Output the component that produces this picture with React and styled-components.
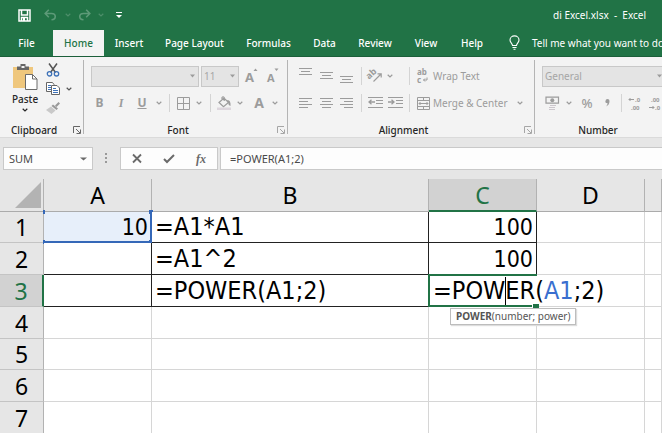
import React from "react";
import styled, { createGlobalStyle } from "styled-components";

const GlobalStyle = createGlobalStyle`
  * { box-sizing: border-box; }
  html, body, #root { height: 100%; }
  body { margin: 0; background: #fff; overflow: hidden; }
  body, button, input, select { font-family: "Noto Sans", sans-serif; font-size: 10px; }
  button { border: 0; padding: 0; background: none; color: inherit; }
`;

const Window = styled.div`
  display: flex;
  flex-direction: column;
  height: 100%;
  margin-right: 2px;
  overflow: hidden;
  background: #e6e6e6;
  color: #262626;
`;

const TitleBar = styled.header`
  display: flex;
  align-items: center;
  flex: none;
  height: 30px;
  padding: 0 16px 0 14px;
  background: #217346;
  color: #fff;
`;

const Title = styled.h1`
  flex: 1;
  margin: 0;
  font-size: 10px;
  font-weight: 400;
  line-height: 28px;
  text-align: right;
  white-space: pre;
`;

const TabBar = styled.nav`
  display: flex;
  flex: none;
  height: 27px;
  background: #217346;
  border-bottom: 1px solid #1b5f3a;
  overflow: hidden;
`;

const Tab = styled.button`
  flex: none;
  width: ${(p) => p.$w}px;
  height: 27px;
  padding-bottom: 1px;
  color: ${(p) => (p.$active ? "#217346" : "#fff")};
  background: ${(p) => (p.$active ? "#f3f3f3" : "transparent")};
  font-weight: 500;
  white-space: nowrap;
`;

const TellMe = styled.button`
  display: flex;
  align-items: center;
  gap: 12px;
  flex: none;
  padding: 0 0 1px 14px;
  color: #fff;
  white-space: nowrap;
`;

const Ribbon = styled.div`
  display: flex;
  flex: none;
  height: 81px;
  background: #f3f3f3;
  border-bottom: 1px solid #dadada;
  overflow: hidden;
`;

const Group = styled.section`
  display: flex;
  flex-direction: column;
  flex: ${(p) => (p.$w ? "none" : "1 0 127px")};
  width: ${(p) => (p.$w ? `${p.$w}px` : "auto")};
  margin-top: 3px;
  padding: 0 ${(p) => (p.$w ? 3 : 0)}px 0 5px;
  background: ${(p) =>
    p.$w ? "linear-gradient(#b4b4b4, #b4b4b4) right top / 1px calc(100% - 3px) no-repeat" : "none"};
`;

const GroupFooter = styled.div`
  display: flex;
  align-items: center;
  height: 14px;
  margin-top: auto;
  h2 {
    flex: 1;
    margin: 0;
    padding-right: 10px;
    font-size: 10px;
    font-weight: 500;
    line-height: 14px;
    text-align: center;
  }
`;

const ToolRow = styled.div`
  display: flex;
  align-items: center;
  height: 26px;
  margin-top: ${(p) => p.$top || 0}px;
  color: #9c9c9c;
`;

const Tool = styled.button`
  display: flex;
  align-items: center;
  justify-content: ${(p) => (p.$start ? "flex-start" : "center")};
  gap: 3px;
  flex: none;
  width: ${(p) => p.$w}px;
  height: 22px;
  color: ${(p) => p.$color || "inherit"};
  white-space: nowrap;
`;

const Glyph = styled.span`
  font-size: ${(p) => p.$size || 12}px;
  font-weight: ${(p) => (p.$bold ? 700 : 500)};
  font-style: ${(p) => (p.$italic ? "italic" : "normal")};
  font-family: ${(p) => (p.$italic ? '"Liberation Serif", serif' : "inherit")};
  text-decoration: ${(p) => (p.$under ? "underline" : "none")};
  line-height: 16px;
`;

const Sep = styled.span`
  flex: none;
  width: 1px;
  height: 18px;
  margin: 0 ${(p) => p.$right ?? 4}px 0 ${(p) => p.$left ?? 4}px;
  background: #d4d4d4;
`;

const Combo = styled.label`
  position: relative;
  display: flex;
  align-items: center;
  flex: ${(p) => (p.$w ? "none" : "1")};
  width: ${(p) => (p.$w ? `${p.$w}px` : "auto")};
  margin-left: 2px;
  height: 21px;
  background: #e4e4e4;
  border: 1px solid #c8c8c8;
  select {
    appearance: none;
    width: 100%;
    height: 19px;
    padding: 0 2px;
    border: 0;
    border-radius: 0;
    background: none;
    color: #a6a6a6;
    opacity: 1;
  }
  svg { position: absolute; right: 3px; }
`;

const PasteArea = styled.div`
  display: flex;
  height: 60px;
`;

const Paste = styled.button`
  display: flex;
  flex-direction: column;
  align-items: center;
  width: 40px;
  padding-top: 3px;
  font-weight: 500;
  line-height: 18px;
`;

const ClipTools = styled.div`
  display: flex;
  flex-direction: column;
  > div { display: flex; align-items: center; height: 19px; }
`;

const FormulaBar = styled.div`
  display: flex;
  flex: none;
  height: 23px;
  margin-top: 9px;
`;

const Field = styled.div`
  display: flex;
  align-items: center;
  flex: ${(p) => (p.$w ? "none" : "1")};
  width: ${(p) => (p.$w ? `${p.$w}px` : "auto")};
  margin-left: ${(p) => p.$left}px;
  background: #fdfdfd;
  border: 1px solid #c9c9c9;
  ${(p) => !p.$w && "border-right: 0;"}
  color: #6a6a6a;
  input {
    flex: 1;
    min-width: 0;
    height: 20px;
    padding: 0 0 0 ${(p) => p.$pad}px;
    border: 0;
    outline: 0;
    background: none;
    color: #4a4a4a;
    font-size: 11px;
  }
`;

const Grip = styled.div`
  display: flex;
  align-items: center;
  justify-content: center;
  width: 26px;
`;

const Sheet = styled.main`
  flex: 1;
  min-height: 0;
  margin-top: 9px;
  overflow: hidden;
  background: #fff;
`;

const Grid = styled.table`
  width: 100%;
  table-layout: fixed;
  border-collapse: separate;
  border-spacing: 0;
  color: #000;
`;

const Col = styled.col`
  width: ${(p) => (p.$w ? `${p.$w}px` : "auto")};
`;

const Head = styled.th`
  height: ${(p) => (p.$row ? "auto" : "33px")};
  padding: 0;
  background: ${(p) => (p.$on ? "#d2d2d2" : "#e6e6e6")};
  color: ${(p) => (p.$on ? "#217346" : "#000")};
  border-right: 1px solid #b2b2b2;
  border-bottom: 1px solid ${(p) => (p.$row ? "#c4c4c4" : "#ababab")};
  ${(p) => p.$on && !p.$row && "border-bottom: 2px solid #217346;"}
  ${(p) => p.$on && p.$row && "border-right: 2px solid #217346;"}
  font-size: 23px;
  font-weight: 400;
  line-height: 28px;
  text-align: center;
  svg { display: block; margin: 0 2px 0 auto; }
`;

const Row = styled.tr`
  height: ${(p) => p.$h}px;
`;

const Cell = styled.td`
  position: relative;
  padding: 0 3px;
  border-right: 1px solid ${(p) => (p.$boxed ? "#222" : "#d6d6d6")};
  border-bottom: 1px solid ${(p) => (p.$boxed ? "#222" : "#d6d6d6")};
  background: ${(p) => (p.$ref ? "#e7effa" : "#fff")};
  font-family: "DejaVu Sans Condensed", "Noto Sans", sans-serif;
  font-size: ${(p) => (p.$num ? 23 : 25)}px;
  line-height: 28px;
  text-align: ${(p) => (p.$num ? "right" : "left")};
  white-space: nowrap;
`;

const RefBox = styled.span`
  position: absolute;
  inset: -1px -1px -1px 0;
  border-right: 2px solid #3568b8;
  border-bottom: 2px solid #3568b8;
`;

const Handle = styled.i`
  position: absolute;
  width: 4px;
  height: 4px;
  background: #3568b8;
  ${(p) => (p.$y === "top" ? "top: -1px;" : "bottom: -3px;")}
  ${(p) => (p.$x === "left" ? "left: -1px; width: 2px;" : "right: -3px;")}
`;

const Editor = styled.div`
  position: absolute;
  z-index: 1;
  top: 0;
  left: 0;
  width: 181px;
  height: 31px;
  padding: 2px 0 0 4px;
  background: #fff;
`;

const EditFrame = styled.span`
  position: absolute;
  top: -1px;
  left: -1px;
  width: 109px;
  height: 33px;
  border: 2px solid #217346;
  border-right: 0;
  &::after {
    content: "";
    position: absolute;
    right: -2px;
    bottom: -3px;
    width: 6px;
    height: 4px;
    background: #217346;
    border-left: 1px solid #fff;
  }
`;

const Caret = styled.span`
  display: inline-block;
  width: 1px;
  height: 28px;
  margin-right: -1px;
  background: #000;
  vertical-align: top;
`;

const RefText = styled.span`
  color: #3a6fcf;
`;

const Hint = styled.div`
  position: absolute;
  z-index: 2;
  top: 33px;
  left: 21px;
  height: 17px;
  padding: 0 5px;
  background: #fff;
  border: 1px solid #bdbdbd;
  box-shadow: 1px 1px 1px #ddd;
  color: #555;
  font: 10px/14px "Noto Sans", sans-serif;
`;

const IconText = styled.text`
  fill: currentColor;
  stroke: none;
  font-weight: 700;
  font-size: ${(p) => p.$size}px;
`;

const Icon = ({ w = 14, h = 14, children, ...rest }) => (
  <svg width={w} height={h} viewBox={`0 0 ${w} ${h}`} overflow="visible" fill="none" stroke="currentColor" strokeWidth="1" aria-hidden="true" {...rest}>
    {children}
  </svg>
);

const Chevron = () => <Icon w={6} h={4}><path d="M.7.8 3 3 5.3.8" strokeWidth="1.2" /></Icon>;
const Down = ({ w = 5 }) => <Icon w={w} h={4}><path d={`M0 .5h${w}L${w / 2} 3.5z`} fill="currentColor" stroke="none" /></Icon>;
const Launcher = ({ color = "#a6a6a6" }) => (
  <Icon w={8} h={8} color={color}><path d="M.5 7V.5H7M3 3l4 4M7.5 3.5v4h-4" /></Icon>
);
const Save = () => (
  <Icon w={13} h={13}><path d="M1 1h11v11H1zM3.500 1v5h6V1M3.500 12V8.500h6V12" strokeWidth="1.500" /><path d="M5 9h2v3H5z" fill="currentColor" stroke="none" /></Icon>
);
const Undo = ({ flip }) => (
  <Icon w={13} h={12}>
    <path transform={flip ? "translate(13 0) scale(-1 1)" : undefined} d="M4.800.8 1.200 4.500 4.800 8.200M1.500 4.500h6c5 0 5 6 0 6.300" strokeWidth="1.600" />
  </Icon>
);
const Bulb = () => (
  <Icon w={11} h={15}><path d="M3.500 10.500C3.500 8.500 1 7.500 1 4.900a4.500 4 0 0 1 9 0c0 2.600-2.500 3.600-2.500 5.600zM3.500 12.500h4M4.500 14.300h2" strokeWidth="1.100" /></Icon>
);
const PasteIcon = () => (
  <Icon w={26} h={27}>
    <path d="M1 4h20v21H1z" fill="#efc77d" stroke="none" />
    <path d="M5 7V3.500h3.500V1h5v2.500H17V7z" fill="#666" stroke="none" />
    <path d="M9.500 3h3v2h-3z" fill="#f3f3f3" stroke="none" />
    <path d="M13.500 11.500h7l4.500 4.500v10.500H13.500z" fill="#fff" stroke="#6b6b6b" />
    <path d="M20.500 11.500V16H25" stroke="#6b6b6b" />
  </Icon>
);
const Scissors = () => (
  <Icon w={14} h={14}>
    <path d="M3 .5 9.500 9.500M11 .5 4.500 9.500" stroke="#555" strokeWidth="1.500" />
    <circle cx="3.500" cy="10.800" r="2.200" stroke="#3e72b8" strokeWidth="1.300" /><circle cx="10.500" cy="10.800" r="2.200" stroke="#3e72b8" strokeWidth="1.300" />
  </Icon>
);
const Copy = () => (
  <Icon w={14} h={13}>
    <path d="M.5.5h6l1.500 2v7H.5z" fill="#fff" stroke="#666" />
    <path d="M2 3.500h3M2 5.500h3M2 7.500h3" stroke="#3e72b8" />
    <path d="M5.500 3.500H11L13.500 6v6.500h-8z" fill="#fff" stroke="#666" />
    <path d="M7 6.500h3M7 8.500h5M7 10.500h5" stroke="#3e72b8" />
  </Icon>
);
const Brush = () => (
  <Icon w={14} h={12}><path d="m12.500 0 1.500 1.500-3.500 3.500L9 3.500zM7 2.500l5 4-1.500 1.500L5.500 4z" fill="#999" stroke="none" /><path d="M5 4.500 9.500 8.500 5.500 12 0 8z" fill="#c9c9c9" stroke="none" /></Icon>
);
const Borders = () => <Icon w={13} h={13}><path d="M.5.5h12v12H.5zM6.500.5v12M.5 6.500h12" /></Icon>;
const Bucket = () => (
  <Icon w={14} h={14}><path d="m2 6.500 5-4.500 4.500 4.500-5 4.300zM5 5V1.500Q6 0 7.200 1.500V5" strokeWidth="1.200" /><path d="M10 4q4-.5 3.500 6Q11 9 11 6z" fill="currentColor" stroke="none" /><path d="M0 11.500h14V14H0z" fill="#ddd6dd" stroke="none" /></Icon>
);
const Lines = ({ rows }) => (
  <Icon w={13} h={11}>{rows.map(([x1, x2], i) => <path key={i} d={`M${x1} ${i * 3 + 0.5}H${x2}`} />)}</Icon>
);
const VLines = ({ top }) => (
  <Icon w={13} h={18}><path d={`M0 ${top + 0.5}h13M2 ${top + 3.5}h9M0 ${top + 6.5}h13`} /></Icon>
);
const Orient = () => (
  <Icon w={15} h={14}><IconText x="0" y="8" transform="rotate(-42 4 8)" $size={9}>ab</IconText><path d="M5.500 12.500 13 5M9.500 4.800h3.700v3.700" strokeWidth="1.200" /></Icon>
);
const Wrap = () => (
  <Icon w={13} h={14}><IconText x="0" y="6" $size={8}>ab</IconText><IconText x="0" y="14" $size={8}>c</IconText><path d="M10 8.500V11H6.500M8 9.500 6.500 11 8 12.500" /></Icon>
);
const Merge = () => (
  <Icon w={13} h={13}><path d="M.5.5h12v12H.5zM.5 3.500h12M.5 9.500h12M6.500.5v3M6.500 9.500v3M2 6.500h9M3.500 5 2 6.500 3.500 8M9.500 5 11 6.500 9.500 8" /></Icon>
);
const Indent = ({ out }) => (
  <Icon w={15} h={12}><path d="M0 .5h15M8 3.500h7M8 6.500h7M0 10.500h15" /><path d={out ? "M1 5h6M3.500 2.700 1 5l2.500 2.300" : "M0 5h6M3.500 2.700 6 5 3.500 7.300"} strokeWidth="1.300" /></Icon>
);
const Money = () => (
  <Icon w={15} h={14}><path d="M1 1.200h12.500v6H1z" strokeWidth="1.200" /><circle cx="7.300" cy="4.200" r="2" fill="currentColor" stroke="none" /><path d="M5 9.500h6M4 11.500h6M4 13.500h6" stroke="#ccc6cc" /></Icon>
);
const Decimals = ({ up }) => (
  <Icon w={13} h={14}>
    <IconText x={up ? 6 : 2} y="6" $size={6}>{up ? ".0" : ".00"}</IconText>
    <IconText x={up ? 2 : 6} y="14" $size={6}>{up ? ".00" : ".0"}</IconText>
    <path d={up ? "M0 3.500h5M1.500 2 0 3.500 1.500 5" : "M0 11.500h5M3.500 10 5 11.500 3.500 13"} />
  </Icon>
);
const FontStep = ({ size, arrow }) => (
  <Icon w={13} h={18}><IconText x="0" y="15" $size={size}>A</IconText><path d={arrow} fill="currentColor" stroke="none" /></Icon>
);

const DropTool = ({ w, label, disabled = true, color }) => (
  <Tool $w={w} $color={color} aria-label={label} disabled={disabled}><Chevron /></Tool>
);

const tabs = [
  ["File", 53], ["Home", 51], ["Insert", 50], ["Page Layout", 81], ["Formulas", 67],
  ["Data", 45], ["Review", 56], ["View", 46], ["Help", 46],
];

const rows = [
  { h: 31, b: "=A1*A1", c: "100" },
  { h: 32, b: "=A1^2", c: "100" },
  { h: 32, b: "=POWER(A1;2)" },
  { h: 32 }, { h: 31 }, { h: 32 }, { h: 32 },
];

export default function App() {
  return (
    <>
      <GlobalStyle />
      <Window>
        <TitleBar>
          <Tool $w={21} aria-label="Save"><Save /></Tool>
          <Tool $w={30} $color="#5d9a78" aria-label="Undo"><Undo /></Tool>
          <Tool $w={5} $color="#4d8e6a" aria-label="Undo history"><Chevron /></Tool>
          <Tool $w={28} $color="#5d9a78" aria-label="Redo"><Undo flip /></Tool>
          <Tool $w={5} $color="#4d8e6a" aria-label="Redo history"><Chevron /></Tool>
          <Tool $w={31} aria-label="Customize toolbar">
            <Icon w={6} h={7}><path d="M0 .5h6" /><path d="M0 3h6L3 6z" fill="currentColor" stroke="none" /></Icon>
          </Tool>
          <Title>{"di Excel.xlsx  -  Excel"}</Title>
        </TitleBar>
        <TabBar>
          {tabs.map(([name, w]) => <Tab key={name} $w={w} $active={name === "Home"}>{name}</Tab>)}
          <TellMe><Bulb />Tell me what you want to do</TellMe>
        </TabBar>

        <Ribbon>
          <Group $w={84}>
            <PasteArea>
              <Paste><PasteIcon />Paste<Chevron /></Paste>
              <ClipTools>
                <div><Tool $w={16} aria-label="Cut"><Scissors /></Tool></div>
                <div>
                  <Tool $w={16} aria-label="Copy"><Copy /></Tool>
                  <DropTool w={16} label="Copy options" disabled={false} color="#555" />
                </div>
                <div><Tool $w={16} aria-label="Format Painter"><Brush /></Tool></div>
              </ClipTools>
            </PasteArea>
            <GroupFooter><h2>Clipboard</h2><button aria-label="Clipboard settings"><Launcher color="#666" /></button></GroupFooter>
          </Group>

          <Group $w={204}>
            <ToolRow $top={3}>
              <Combo $w={108}><select aria-label="Font name" disabled><option> </option></select><Down /></Combo>
              <Combo $w={38}><select aria-label="Font size" disabled><option>11</option></select><Down /></Combo>
              <Tool $w={24} aria-label="Increase font size" disabled>
                <FontStep size={13} arrow="m8.500 4 2-2.500 2 2.500z" />
              </Tool>
              <Tool $w={20} aria-label="Decrease font size" disabled>
                <FontStep size={11} arrow="m7.500 1.500 2 2.500 2-2.500z" />
              </Tool>
            </ToolRow>
            <ToolRow $top={1}>
              <Tool $w={21} aria-label="Bold" disabled><Glyph $bold>B</Glyph></Tool>
              <Tool $w={22} aria-label="Italic" disabled><Glyph $italic $bold>I</Glyph></Tool>
              <Tool $w={20} aria-label="Underline" disabled><Glyph $under $bold>U</Glyph></Tool>
              <DropTool w={13} label="Underline style" />
              <Sep />
              <Tool $w={18} aria-label="Borders" disabled><Borders /></Tool>
              <DropTool w={14} label="Border style" />
              <Sep />
              <Tool $w={18} aria-label="Fill color" disabled><Bucket /></Tool>
              <DropTool w={14} label="Fill colors" />
              <Tool $w={24} aria-label="Font color" disabled><Glyph $size={14} $bold>A</Glyph></Tool>
              <DropTool w={8} label="Font colors" />
            </ToolRow>
            <GroupFooter><h2>Font</h2><button aria-label="Font settings"><Launcher /></button></GroupFooter>
          </Group>

          <Group $w={247}>
            <ToolRow $top={3}>
              <Tool $w={25} aria-label="Top align" disabled><VLines top={1} /></Tool>
              <Tool $w={17} aria-label="Middle align" disabled><VLines top={5} /></Tool>
              <Tool $w={23} aria-label="Bottom align" disabled><VLines top={9} /></Tool>
              <Sep $left={3} />
              <Tool $w={19} aria-label="Orientation" disabled><Orient /></Tool>
              <DropTool w={9} label="Orientation options" />
              <Sep $left={15} $right={7} />
              <Tool $start $w={95} disabled><Wrap />Wrap Text</Tool>
            </ToolRow>
            <ToolRow $top={1}>
              <Tool $w={25} aria-label="Align left" disabled><Lines rows={[[0, 13], [0, 9], [0, 13], [0, 9]]} /></Tool>
              <Tool $w={17} aria-label="Center" disabled><Lines rows={[[0, 13], [2, 11], [0, 13], [2, 11]]} /></Tool>
              <Tool $w={23} aria-label="Align right" disabled><Lines rows={[[0, 13], [4, 13], [0, 13], [4, 13]]} /></Tool>
              <Sep $left={3} />
              <Tool $w={19} aria-label="Decrease indent" disabled><Indent out /></Tool>
              <Tool $w={20} aria-label="Increase indent" disabled><Indent /></Tool>
              <Sep $right={7} />
              <Tool $start $w={99} disabled><Merge />Merge &amp; Center</Tool>
              <DropTool w={8} label="Merge options" />
            </ToolRow>
            <GroupFooter><h2>Alignment</h2><button aria-label="Alignment settings"><Launcher /></button></GroupFooter>
          </Group>

          <Group>
            <ToolRow $top={3}>
              <Combo><select aria-label="Number format" disabled><option>General</option></select><Down /></Combo>
            </ToolRow>
            <ToolRow $top={1}>
              <Tool $w={24} aria-label="Accounting format" disabled><Money /></Tool>
              <DropTool w={10} label="Currency" />
              <Tool $w={26} aria-label="Percent style" disabled><Glyph $size={13}>%</Glyph></Tool>
              <Tool $w={14} aria-label="Comma style" disabled><Icon w={5} h={8}><path d="M.5 2a2 2 0 1 1 4 0q0 4-3.500 5.500Q2.500 6 2.500 4-.3 4 .5 2z" fill="currentColor" stroke="none" /></Icon></Tool>
              <Sep $left={7} />
              <Tool $w={18} aria-label="Increase decimal" disabled><Decimals up /></Tool>
              <Tool $w={22} aria-label="Decrease decimal" disabled><Decimals /></Tool>
            </ToolRow>
            <GroupFooter><h2>Number</h2></GroupFooter>
          </Group>
        </Ribbon>

        <FormulaBar>
          <Field $w={90} $left={3} $pad={5}>
            <input aria-label="Name box" defaultValue="SUM" />
            <Tool $w={17} aria-label="Names"><Down w={7} /></Tool>
          </Field>
          <Grip><Icon w={2} h={11}><path d="M1 0v11" stroke="#999" strokeWidth="2" strokeDasharray="2 2" /></Icon></Grip>
          <Field $w={98} $left={1} $pad={0}>
            <Tool $w={32} aria-label="Cancel"><Icon w={10} h={9}><path d="M1 .5 9 8.500M9 .5 1 8.500" strokeWidth="1.800" /></Icon></Tool>
            <Tool $w={32} aria-label="Enter"><Icon w={12} h={9}><path d="M1 5 4 8 11 1" strokeWidth="2" /></Icon></Tool>
            <Tool $w={32} aria-label="Insert function"><Glyph $italic $bold>fx</Glyph></Tool>
          </Field>
          <Field $left={2} $pad={9}>
            <input aria-label="Formula" defaultValue="=POWER(A1;2)" />
          </Field>
        </FormulaBar>

        <Sheet>
          <Grid>
            <colgroup>
              <Col $w={44} /><Col $w={108} /><Col $w={277} /><Col $w={108} /><Col $w={108} /><Col />
            </colgroup>
            <thead>
              <tr>
                <Head aria-label="Select all"><Icon w={26} h={26}><path d="M26 0v26H0z" fill="#b3b3b3" stroke="none" /></Icon></Head>
                {["A", "B", "C", "D"].map((c) => <Head key={c} $on={c === "C"}>{c}</Head>)}
                <Head aria-label="E" />
              </tr>
            </thead>
            <tbody>
              {rows.map((r, i) => (
                <Row key={i} $h={r.h}>
                  <Head scope="row" $row $on={i === 2}>{i + 1}</Head>
                  <Cell $boxed={i < 3} $ref={i === 0} $num>
                    {i === 0 && (
                      <>10<RefBox><Handle $x="left" $y="top" /><Handle $x="right" $y="top" /><Handle $x="left" $y="bottom" /><Handle $x="right" $y="bottom" /></RefBox></>
                    )}
                  </Cell>
                  <Cell $boxed={i < 3}>{r.b}</Cell>
                  <Cell $boxed={i < 2} $num={i !== 2}>
                    {r.c}
                    {i === 2 && (
                      <>
                        <Editor>
                          <EditFrame />=POW<Caret />ER(<RefText>A1</RefText>;2)
                        </Editor>
                        <Hint><b>POWER</b>(number; power)</Hint>
                      </>
                    )}
                  </Cell>
                  <Cell />
                  <Cell />
                </Row>
              ))}
            </tbody>
          </Grid>
        </Sheet>
      </Window>
    </>
  );
}
